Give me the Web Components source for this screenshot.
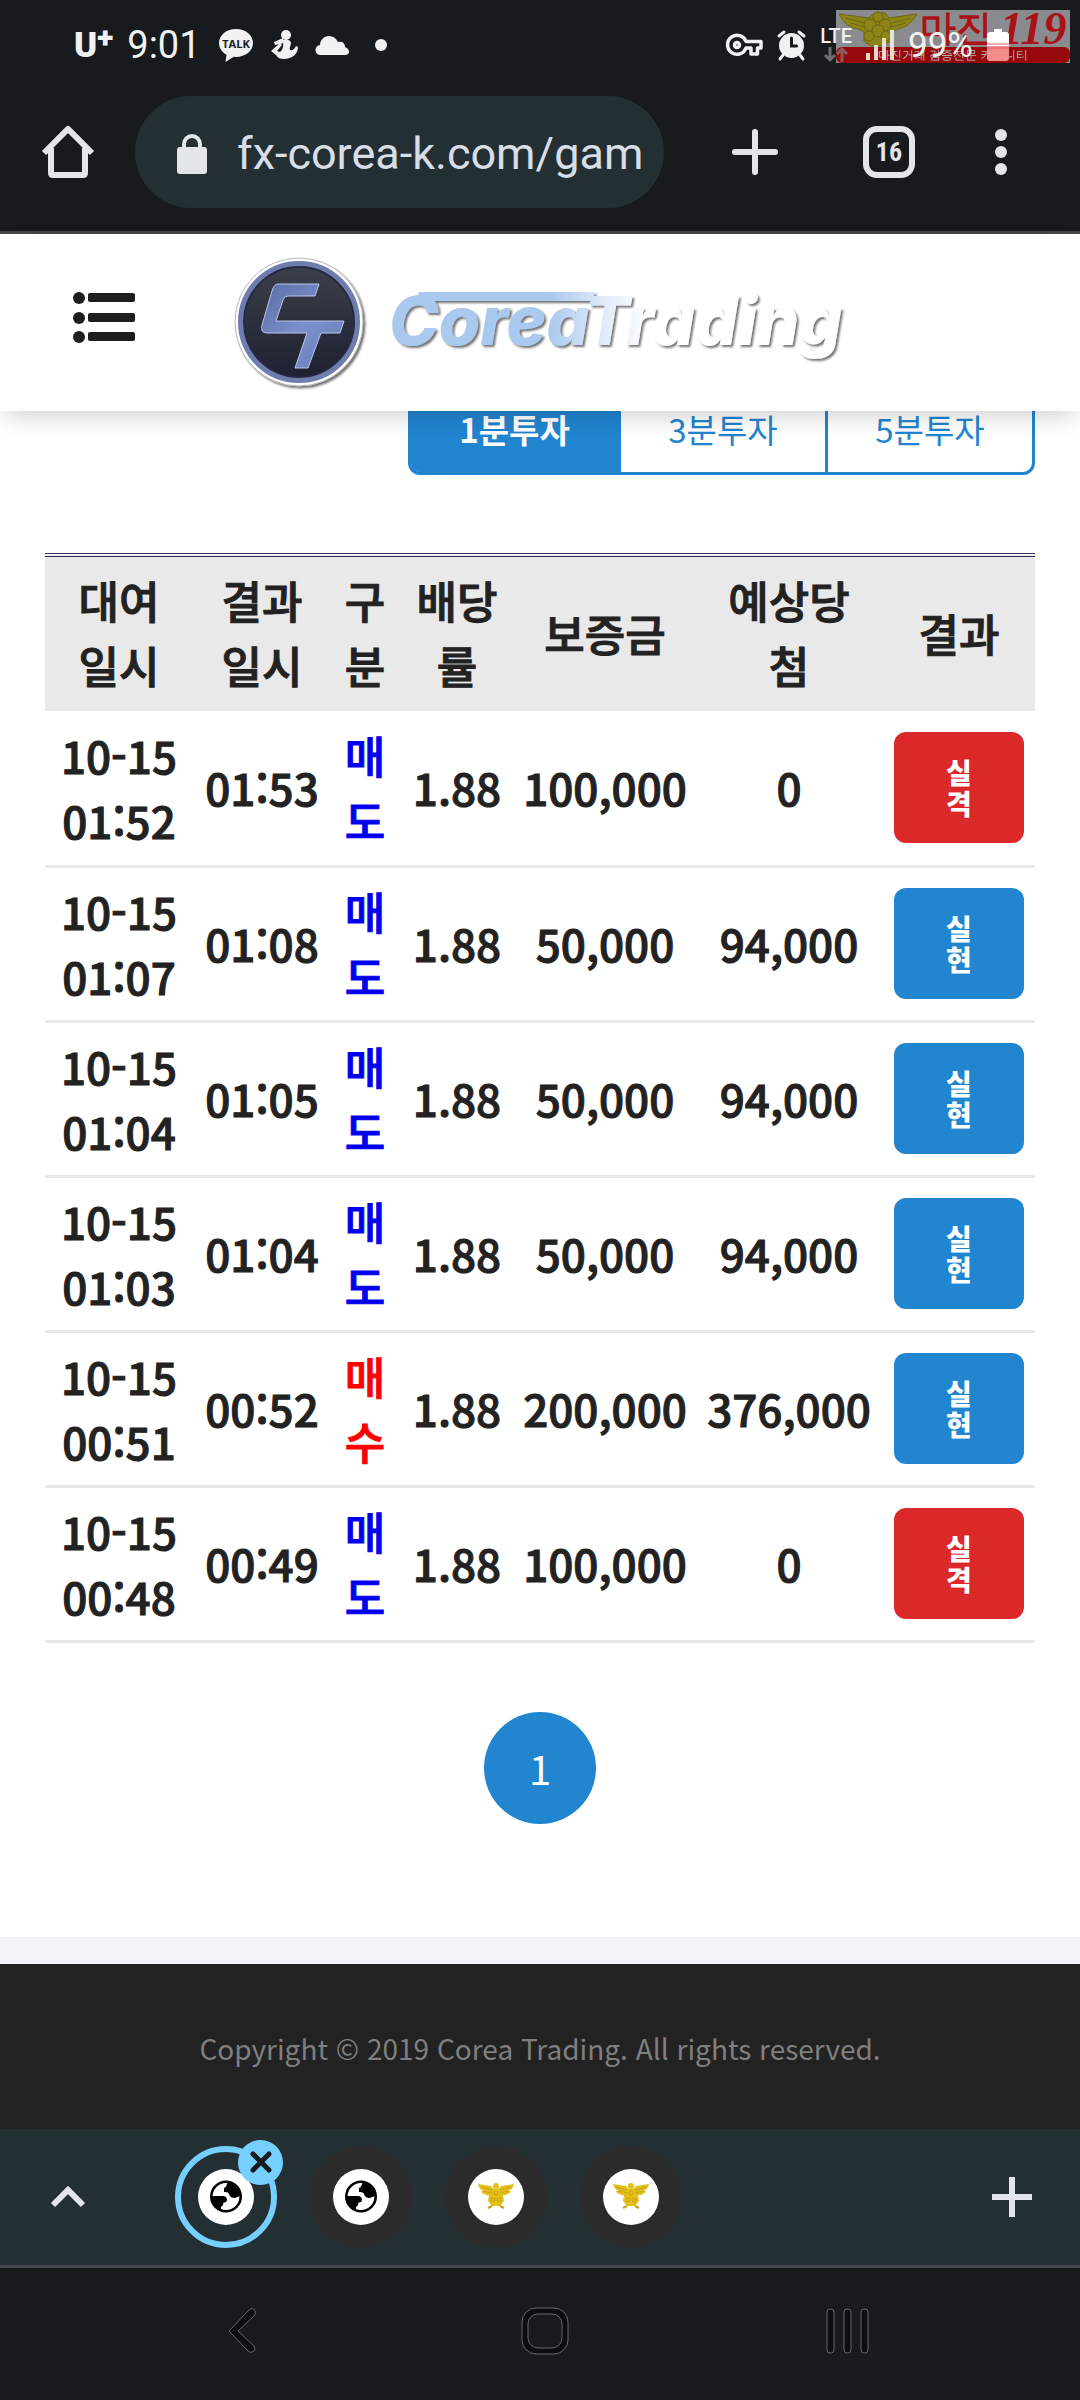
<!DOCTYPE html>
<html lang="ko">
<head>
<meta charset="utf-8">
<meta name="viewport" content="width=device-width, initial-scale=1">
<title>Corea Trading</title>
<style>
  body {
    margin: 0;
    background: #171b1e;
    color: #222;
    font-family: "Noto Sans CJK KR", sans-serif;
  }
</style>
</head>
<body>
<status-bar></status-bar>
<browser-bar url="fx-corea-k.com/gam" tabs="16"></browser-bar>
<site-header></site-header>
<site-content>
  <minute-tabs></minute-tabs>
  <trade-table></trade-table>
  <page-nav></page-nav>
</site-content>
<site-footer>Copyright © 2019 Corea Trading. All rights reserved.</site-footer>
<tab-strip></tab-strip>
<system-nav></system-nav>

<script>
const icons = {
  talk: `<svg width="34" height="33" viewBox="0 0 34 33"><path fill="#f1f1f1" d="M17 0C7.500 0 0 6.200 0 14c0 5 3 9.300 7.500 11.800L6.500 33l8.300-5.200 2.200.1c9.500 0 17-6 17-13.900S26.500 0 17 0z"/><text x="17" y="19" text-anchor="middle" font-family="Open Sans" font-size="11" font-weight="700" fill="#171b1e">TALK</text></svg>`,
  figure: `<svg width="27" height="30" viewBox="0 0 27 30"><g fill="#f1f1f1"><circle cx="15" cy="5" r="5"/><path d="M12 8L3 12l1 3 9-2z"/><path d="M12 10c4-1 8 0 8 3 0 3-2 4-1 7 2 1 4 0 6-4l2 1c0 7-6 12-14 12-4 0-6-1-8-4l-5-4 9-8 2 2-5 6 3 1c2-2 4-4 3-12z"/></g></svg>`,
  cloud: `<svg width="33" height="19" viewBox="0 0 33 19"><path fill="#f1f1f1" d="M5 19a5 5 0 0 1-1-10C4 4 8 0 13 0c4 0 7 2 9 6 4-1 7 1 7 5 3 1 4 3 4 5 0 2-2 3-4 3z"/></svg>`,
  dot: `<svg width="12" height="12" viewBox="0 0 12 12"><circle cx="6" cy="6" r="6" fill="#f1f1f1"/></svg>`,
  key: `<svg width="37" height="23" viewBox="0 0 37 23"><g fill="none" stroke="#f1f1f1" stroke-width="3.500" stroke-linejoin="round"><path d="M20 7.500h15v6.500h-3.500v6H25v-6h-5A9.500 9.500 0 1 1 20 7.500z"/><circle cx="11" cy="11" r="2.500"/></g></svg>`,
  alarm: `<svg width="29" height="30" viewBox="0 0 29 30"><circle cx="14.500" cy="15.500" r="12.500" fill="#f1f1f1"/><g fill="none" stroke="#f1f1f1" stroke-width="3" stroke-linecap="round"><path d="M2 6l5-4M27 6l-5-4M6 25l-3 4M23 25l3 4"/><path stroke="#171b1e" d="M14.500 8v8h5"/></g></svg>`,
  data: `<svg width="24" height="15" viewBox="0 0 24 15"><path fill="none" stroke="#6c6f71" stroke-width="3" d="M6 0v12M1 8l5 5 5-5"/><path fill="none" stroke="#8d5a5d" stroke-width="3" d="M18 15V3M13 7l5-5 5 5"/></svg>`,
  signal: `<svg width="28" height="30" viewBox="0 0 28 30"><path fill="#f1eeda" fill-opacity=".9" d="M0 23h4v7H0zM8 15h4v15H8zM16 8h4v22h-4zM24 0h4v30h-4z"/></svg>`,
  battery: `<svg width="22" height="32" viewBox="0 0 22 32"><path fill="#fff" d="M7 0h8v3h5l2 2v12H0V5l2-2h5z"/><path fill="#f58d8f" d="M0 17h22v13l-2 2H2l-2-2z"/><path stroke="#e7575b" stroke-width="1" d="M0 15h22M0 19h22"/></svg>`,
  home: `<svg width="52" height="53" viewBox="0 0 52 53"><path fill="none" stroke="#e3e6e8" stroke-width="6" stroke-linejoin="round" d="M2 28L26 4l24 24M9 23v25q0 2 2 2h30q2 0 2-2V23"/></svg>`,
  lock: `<svg width="30" height="40" viewBox="0 0 30 40"><rect y="13" width="30" height="27" rx="3" fill="#e3e6e8"/><path fill="none" stroke="#e3e6e8" stroke-width="4" d="M7 15V10a8 8 0 0 1 16 0v5"/></svg>`,
  plus: `<svg width="46" height="46" viewBox="0 0 46 46"><path stroke="#e3e6e8" stroke-width="6" stroke-linecap="round" d="M23 3v40M3 23h40"/></svg>`,
  more: `<svg width="12" height="48" viewBox="0 0 12 48"><g fill="#e3e6e8"><circle cx="6" cy="7" r="6"/><circle cx="6" cy="24" r="6"/><circle cx="6" cy="41" r="6"/></g></svg>`,
  menu: `<svg width="62" height="52" viewBox="0 0 62 52"><g fill="#1e1e1e"><circle cx="6" cy="6" r="6"/><circle cx="6" cy="26" r="6"/><circle cx="6" cy="45" r="6"/><rect x="15" y="1" width="47" height="9" rx="2"/><rect x="15" y="21" width="47" height="9" rx="2"/><rect x="15" y="40" width="47" height="9" rx="2"/></g></svg>`,
  caret: `<svg width="34" height="22" viewBox="0 0 34 22"><path fill="none" stroke="#e3e6ec" stroke-width="6" d="M2 19L17 4l15 15"/></svg>`,
  add: `<svg width="40" height="40" viewBox="0 0 40 40"><path stroke="#e3e6ec" stroke-width="6" d="M20 0v40M0 20h40"/></svg>`,
  close: `<svg width="22" height="22" viewBox="0 0 22 22"><path stroke="#171b1e" stroke-width="5" stroke-linecap="round" d="M3 3l16 16M19 3L3 19"/></svg>`,
  globe: `<svg width="32" height="33" viewBox="0 0 32 33"><circle cx="16" cy="16.500" r="14.700" fill="none" stroke="#000" stroke-width="2.600"/><path d="M18 2c-2 3-1 5-4 6v4c2 0 4 0 5 2 1 3 3 4 6 4 2-1 4-2 6-2C31 8 26 2 18 2zM1 16h11c4 0 5 2 5 4s-2 2-4 3c1 2-1 3-2 4v4C4 29 0 22 1 16z"/></svg>`,
  eagle: `<svg width="36" height="27" viewBox="0 0 36 27"><g fill="#e3c018"><path d="M0 1l13 2 3 3-2 6C9 13 4 11 3 8l3 0C3 7 1 5 0 1zM36 1L23 3l-3 3 2 6c5 1 10-1 11-4l-3 0c3-1 5-3 6-7z"/><circle cx="18" cy="3" r="3"/><path d="M12 6h12l2 12-4 5h-8l-4-5z"/></g><g fill="none" stroke="#c8a414"><path d="M3 4l11 3M5 8l9 2M33 4L22 7M31 8l-9 2"/><circle cx="18" cy="10" r="2"/><circle cx="15" cy="17" r="2"/><circle cx="21" cy="17" r="2"/><path stroke-width="2" d="M14 23l-4 2M22 23l4 2"/></g></svg>`,
  back: `<svg width="28" height="46" viewBox="0 0 28 46"><path fill="#0b0e10" stroke="#66696b" d="M21 2Q25-1 27 3q1 3-1 5L10 23l16 15q2 3 0 5-3 3-6 0L1 23z"/></svg>`,
  recents: `<svg width="43" height="46" viewBox="0 0 43 46"><g fill="#0b0e10" stroke="#66696b"><rect x="1" y="1" width="7" height="44" rx="3"/><rect x="18" y="1" width="7" height="44" rx="3"/><rect x="35" y="1" width="7" height="44" rx="3"/></g></svg>`,
  square: `<svg width="48" height="48" viewBox="0 0 48 48"><rect x="1" y="1" width="46" height="46" rx="14" fill="#0b0e10" stroke="#66696b"/><rect x="7" y="7" width="34" height="34" rx="10" fill="#171b1e" stroke="#66696b"/></svg>`
};

// shared by every element: styles and markup go straight into an open root
function mount(el, css, html) {
  const root = el.attachShadow({ mode: "open" });
  root.innerHTML = `
    <style>
      :host, * { box-sizing: border-box; }
      button {
        display: flex;
        align-items: center;
        justify-content: center;
        margin: 0;
        padding: 0;
        border: 0;
        background: none;
        color: inherit;
        font: inherit;
      }
      ${css}
    </style>
    ${html}`;
  return root;
}

class Icon extends HTMLElement {
  constructor() {
    super();
    this._root = mount(this, `
      :host { display: block; flex: none; }
      svg { display: block; overflow: visible; }
    `, `<span></span>`);
  }
  static get observedAttributes() {
    return ["name"];
  }
  attributeChangedCallback(name, oldVal, newVal) {
    this._root.querySelector("span").innerHTML = icons[newVal] || "";
  }
}
customElements.define("x-icon", Icon);

class PromoMark extends HTMLElement {
  constructor() {
    super();
    mount(this, `
      :host {
        position: absolute;
        top: 10px;
        right: 10px;
        width: 234px;
        background: #898b8e;
        color: #a91217;
      }
      .top {
        display: flex;
        gap: 2px;
        height: 37px;
        padding-left: 2px;
      }
      svg { display: block; flex: none; }
      b { font-size: 36px; line-height: 37px; font-weight: 900; }
      i {
        padding-left: 6px;
        font: italic 700 46px/37px "Liberation Serif", serif;
      }
      .caption {
        height: 16px;
        border-radius: 6px;
        background: #97080d;
        color: #b5b0b0;
        font-size: 12px;
        line-height: 16px;
        font-weight: 500;
        text-align: center;
      }
    `, `
      <div class="top">
        <svg width="80" height="37" viewBox="0 0 80 37">
          <g fill="#8d8517" stroke="#6b6713">
            <path d="M1 4l30 4q6-8 12-5 4-2 8 5l28-4q-7 13-19 15l-7 3v9l-10 5H33l-7-5v-9l-6-3Q8 18 1 4z"/>
            <circle cx="40" cy="7" r="5"/><circle cx="32" cy="15" r="6"/><circle cx="47" cy="15" r="6"/>
            <circle cx="40" cy="21" r="6"/><circle cx="31" cy="26" r="5"/><circle cx="48" cy="26" r="5"/>
            <path fill="none" d="M8 8l18 5M12 13l15 4M72 8l-18 5M68 13l-15 4"/>
          </g>
        </svg>
        <b>마진</b><i>119</i>
      </div>
      <div class="caption">마진거래 검증전문 커뮤니티</div>
    `);
  }
}
customElements.define("promo-mark", PromoMark);

class StatusBar extends HTMLElement {
  constructor() {
    super();
    mount(this, `
      :host {
        position: relative;
        display: flex;
        justify-content: space-between;
        height: 88px;
        padding: 2px 71px 0 74px;
        color: #f1f1f1;
        font: 38px/1 Roboto, sans-serif;
      }
      .group {
        position: relative;
        display: flex;
        align-items: center;
      }
      .left { gap: 18px; }
      .right { gap: 14px; }
      .clock { display: flex; align-items: center; gap: 14px; }
      .carrier { display: flex; font-size: 35px; font-weight: 900; }
      sup { font-size: 30px; line-height: 20px; }
      .gap { margin-left: 8px; }
      .net { display: grid; gap: 3px; justify-items: center; font-size: 20px; line-height: 15px; font-weight: 500; }
      .level { font-size: 35px; }
    `, `
      <promo-mark></promo-mark>
      <div class="group left">
        <div class="clock"><span class="carrier">U<sup>+</sup></span><span>9:01</span></div>
        <x-icon name="talk"></x-icon>
        <x-icon name="figure"></x-icon>
        <x-icon name="cloud"></x-icon>
        <x-icon name="dot" class="gap"></x-icon>
      </div>
      <div class="group right">
        <x-icon name="key"></x-icon>
        <x-icon name="alarm"></x-icon>
        <span class="net">LTE<x-icon name="data"></x-icon></span>
        <x-icon name="signal"></x-icon>
        <span class="level">99%</span>
        <x-icon name="battery"></x-icon>
      </div>
    `);
  }
}
customElements.define("status-bar", StatusBar);

class BrowserBar extends HTMLElement {
  constructor() {
    super();
    mount(this, `
      :host {
        display: flex;
        align-items: center;
        height: 146px;
        padding: 0 34px 16px 0;
        border-bottom: 3px solid #45484b;
        font-family: Roboto, sans-serif;
        color: #e3e6e8;
      }
      .home { width: 135px; height: 112px; }
      label {
        display: flex;
        flex: 1;
        min-width: 0;
        align-items: center;
        gap: 30px;
        height: 112px;
        margin-right: 24px;
        padding: 4px 20px 0 42px;
        border-radius: 56px;
        background: #242f34;
      }
      input {
        flex: 1;
        min-width: 0;
        padding: 0;
        border: 0;
        background: none;
        color: #d8dee6;
        font: 45px/56px Roboto, sans-serif;
      }
      .tool { width: 134px; height: 112px; }
      .more { width: 90px; }
      .count {
        width: 52px;
        height: 52px;
        border: 6px solid #e3e6e8;
        border-radius: 14px;
        font: 700 26px/40px "Roboto Condensed", Roboto, sans-serif;
      }
    `, `
      <button class="home" aria-label="Home"><x-icon name="home"></x-icon></button>
      <label><x-icon name="lock"></x-icon><input type="text" aria-label="Address" value="${this.getAttribute("url")}"></label>
      <button class="tool" aria-label="New tab"><x-icon name="plus"></x-icon></button>
      <button class="tool" aria-label="Tabs"><span class="count">${this.getAttribute("tabs")}</span></button>
      <button class="tool more" aria-label="More"><x-icon name="more"></x-icon></button>
    `);
  }
}
customElements.define("browser-bar", BrowserBar);

class SiteHeader extends HTMLElement {
  constructor() {
    super();
    mount(this, `
      :host {
        position: relative;
        z-index: 1;
        display: flex;
        align-items: center;
        gap: 98px;
        height: 177px;
        padding-left: 73px;
        background: #fff;
        box-shadow: 0 10px 24px -6px rgba(0, 0, 0, .2);
      }
      button { padding-bottom: 10px; }
      a { display: flex; align-items: center; }
      svg { display: block; overflow: visible; }
    `, `
      <button aria-label="Menu"><x-icon name="menu"></x-icon></button>
      <a href="#" aria-label="CoreaTrading">
        <svg width="620" height="136" viewBox="0 0 620 136">
          <defs>
            <linearGradient id="face" x1="0" y1="0" x2="0" y2="1">
              <stop offset="0" stop-color="#3c404b"/><stop offset="1" stop-color="#1d2030"/>
            </linearGradient>
            <linearGradient id="mark" x1="0" y1="0" x2="1" y2="1">
              <stop offset="0" stop-color="#586da4"/><stop offset=".5" stop-color="#7b90cb"/><stop offset="1" stop-color="#667cb8"/>
            </linearGradient>
            <linearGradient id="word" gradientUnits="userSpaceOnUse" x1="158" y1="0" x2="420" y2="0">
              <stop offset="0" stop-color="#a9c9ee"/><stop offset=".6" stop-color="#a9c9ee"/><stop offset=".84" stop-color="#e6effb"/><stop offset="1" stop-color="#fff"/>
            </linearGradient>
            <filter id="drop" x="-10%" y="-10%" width="125%" height="125%">
              <feDropShadow dx="2" dy="2" stdDeviation="1" flood-color="#444" flood-opacity=".75"/>
            </filter>
          </defs>
          <circle cx="66" cy="67" r="64" fill="#fff" stroke="#b5b5bd" filter="url(#drop)"/>
          <circle cx="66" cy="67" r="58" fill="url(#face)" stroke="#6f7dae" stroke-width="6"/>
          <circle cx="66" cy="67" r="55" fill="none" stroke="#252a42" stroke-width="2"/>
          <path fill="url(#mark)" stroke="#b9c5ec" d="M45 29h41l-4 12H55q-4 0-5 4l-7 21h68l-4 12H88l-13 35H62l12-35H34q-7 0-5-8l10-34q2-7 6-7z"/>
          <g filter="url(#drop)" fill="url(#word)">
            <path d="M186 37h176l-3 9H183z"/>
            <text x="156" y="90" font-family="Inter" font-size="67" font-weight="800" font-style="italic">CoreaTrading</text>
          </g>
        </svg>
      </a>
    `);
  }
}
customElements.define("site-header", SiteHeader);

class SiteContent extends HTMLElement {
  constructor() {
    super();
    mount(this, `
      :host {
        display: block;
        padding: 0 45px 113px;
        background: #fff;
      }
    `, `<slot></slot>`);
  }
}
customElements.define("site-content", SiteContent);

class MinuteTabs extends HTMLElement {
  constructor() {
    super();
    mount(this, `
      :host {
        display: flex;
        justify-content: flex-end;
        margin: 0 0 78px;
      }
      /* the bar is scrolled partly under the header */
      .tabs {
        display: grid;
        grid-template-columns: repeat(3, 1fr);
        width: 627px;
        height: 90px;
        margin-top: -26px;
        border: 3px solid #2185d0;
        border-radius: 12px;
        color: #2185d0;
        font-size: 33px;
        line-height: 40px;
      }
      button { padding-bottom: 2px; }
      button + button { border-left: 3px solid #2185d0; }
      .active { background: #2185d0; color: #fff; font-weight: 700; border-radius: 8px 0 0 8px; }
    `, `
      <div class="tabs">
        <button class="active">1분투자</button>
        <button>3분투자</button>
        <button>5분투자</button>
      </div>
    `);
  }
}
customElements.define("minute-tabs", MinuteTabs);

const trades = [
  ["01:52", "01:53", "매도", "100,000", "0", "실격"],
  ["01:07", "01:08", "매도", "50,000", "94,000", "실현"],
  ["01:04", "01:05", "매도", "50,000", "94,000", "실현"],
  ["01:03", "01:04", "매도", "50,000", "94,000", "실현"],
  ["00:51", "00:52", "매수", "200,000", "376,000", "실현"],
  ["00:48", "00:49", "매도", "100,000", "0", "실격"]
];

class TradeTable extends HTMLElement {
  constructor() {
    super();
    const rows = trades.map(([rent, end, side, deposit, prize, result]) => `
      <tr>
        <td>10-15 ${rent}</td>
        <td>${end}</td>
        <td class="${side === "매수" ? "buy" : "sell"}">${side}</td>
        <td>1.88</td>
        <td>${deposit}</td>
        <td>${prize}</td>
        <td class="result"><button class="${result === "실격" ? "lost" : ""}">${result}</button></td>
      </tr>`).join("");
    mount(this, `
      :host { display: block; }
      table {
        width: 100%;
        table-layout: fixed;
        border-collapse: collapse;
        font-size: 44px;
        line-height: 65px;
        font-weight: 500;
        text-align: center;
        -webkit-text-stroke: 1px;
      }
      col:nth-child(1) { width: 148px; }
      col:nth-child(2) { width: 138px; }
      col:nth-child(3) { width: 68px; }
      col:nth-child(4) { width: 116px; }
      col:nth-child(5) { width: 180px; }
      col:nth-child(6) { width: 188px; }
      col:nth-child(7) { width: 152px; }
      thead { background: #e9e9e9; border-top: 4px double #2d2f55; }
      th, td { padding: 0 6px; font-weight: inherit; }
      th { height: 156px; padding-bottom: 2px; }
      td { height: 155px; border-bottom: 3px solid #e9e9e9; }
      .sell { color: #00e; }
      .buy { color: #f00; }
      .result { padding: 0 11px; }
      .result button {
        width: 100%;
        height: 111px;
        padding: 0 48px;
        border-radius: 12px;
        background: #2185d0;
        color: #fff;
        font-size: 28px;
        line-height: 31px;
        font-weight: 900;
        -webkit-text-stroke: 0;
      }
      .result .lost { background: #db2828; }
    `, `
      <table>
        <colgroup><col><col><col><col><col><col><col></colgroup>
        <thead>
          <tr><th>대여<br>일시</th><th>결과<br>일시</th><th>구분</th><th>배당률</th><th>보증금</th><th>예상당<br>첨</th><th>결과</th></tr>
        </thead>
        <tbody>${rows}</tbody>
      </table>
    `);
  }
}
customElements.define("trade-table", TradeTable);

class PageNav extends HTMLElement {
  constructor() {
    super();
    mount(this, `
      :host {
        display: flex;
        justify-content: center;
        padding-top: 69px;
      }
      a {
        width: 112px;
        height: 112px;
        border-radius: 50%;
        background: #2185d0;
        color: #fff;
        font-size: 40px;
        line-height: 112px;
        text-align: center;
        text-decoration: none;
      }
    `, `<a href="#">1</a>`);
  }
}
customElements.define("page-nav", PageNav);

class SiteFooter extends HTMLElement {
  constructor() {
    super();
    mount(this, `
      :host {
        display: block;
        padding: 64px 16px 61px;
        border-top: 27px solid #f3f2f8;
        background: #222;
        color: #7f7f7f;
        font-size: 28px;
        line-height: 40px;
        text-align: center;
      }
    `, `<slot></slot>`);
  }
}
customElements.define("site-footer", SiteFooter);

class TabStrip extends HTMLElement {
  constructor() {
    super();
    mount(this, `
      :host {
        display: flex;
        align-items: center;
        height: 139px;
        border-bottom: 3px solid #45484f;
        background: #242f34;
      }
      .side { flex: none; width: 136px; height: 136px; }
      .tabs { display: flex; flex: 1; gap: 33px; padding-left: 39px; }
      .tab {
        position: relative;
        width: 102px;
        height: 102px;
        border-radius: 50%;
        background: #2b2b2b;
      }
      .current { border: 6px solid #75d0ff; background: none; }
      .disc {
        display: flex;
        align-items: center;
        justify-content: center;
        width: 56px;
        height: 56px;
        border-radius: 50%;
        background: #fff;
      }
      .badge {
        position: absolute;
        top: -12px;
        right: -12px;
        display: flex;
        align-items: center;
        justify-content: center;
        width: 45px;
        height: 45px;
        border-radius: 50%;
        background: #75d0ff;
      }
    `, `
      <button class="side" aria-label="Expand"><x-icon name="caret"></x-icon></button>
      <div class="tabs">
        <button class="tab current" aria-label="Close tab"><span class="disc"><x-icon name="globe"></x-icon></span><span class="badge"><x-icon name="close"></x-icon></span></button>
        <button class="tab" aria-label="Tab 2"><span class="disc"><x-icon name="globe"></x-icon></span></button>
        <button class="tab" aria-label="Tab 3"><span class="disc"><x-icon name="eagle"></x-icon></span></button>
        <button class="tab" aria-label="Tab 4"><span class="disc"><x-icon name="eagle"></x-icon></span></button>
      </div>
      <button class="side" aria-label="Add tab"><x-icon name="add"></x-icon></button>
    `);
  }
}
customElements.define("tab-strip", TabStrip);

class SystemNav extends HTMLElement {
  constructor() {
    super();
    mount(this, `
      :host {
        display: flex;
        height: 132px;
        padding: 0 81px 6px 91px;
        background: #171b1e;
      }
      button { flex: 1; }
    `, `
      <button aria-label="Back"><x-icon name="back"></x-icon></button>
      <button aria-label="Home"><x-icon name="square"></x-icon></button>
      <button aria-label="Recents"><x-icon name="recents"></x-icon></button>
    `);
  }
}
customElements.define("system-nav", SystemNav);
</script>
</body>
</html>
